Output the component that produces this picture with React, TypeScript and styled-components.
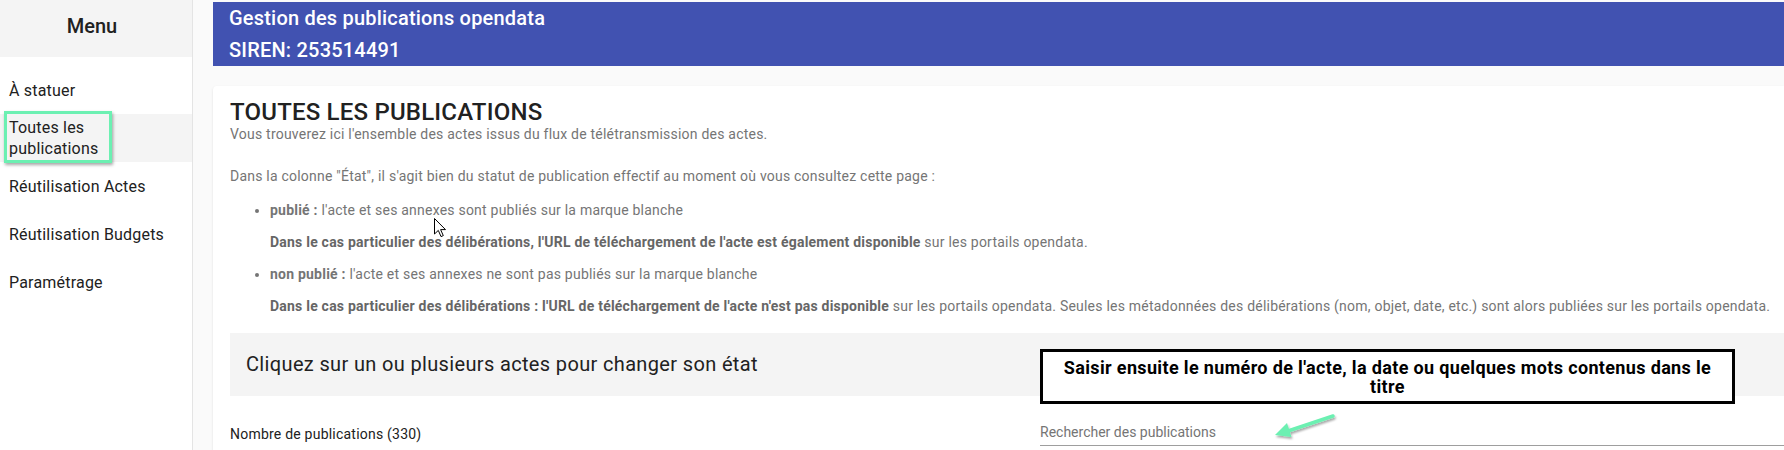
import React from "react";
import styled, { createGlobalStyle } from "styled-components";

const Global = createGlobalStyle`
  html, body { margin: 0; padding: 0; }
  body {
    font-family: Roboto, "Noto Sans", Arial, sans-serif;
    background: #fafafa;
    overflow: hidden;
  }
  * { box-sizing: border-box; }
`;

const Page = styled.div`
  display: flex;
  width: 1784px;
  height: 450px;
  overflow: hidden;
`;

const Sidebar = styled.nav`
  width: 193px;
  flex: 0 0 193px;
  background: #ffffff;
  border-right: 1px solid #e4e4e4;
  position: relative;
`;

const MenuHeader = styled.div`
  height: 57px;
  background: #f4f4f4;
  display: flex;
  align-items: center;
  justify-content: center;
  padding: 0 8px 5px 0;
  font-size: 20px;
  font-weight: 500;
  color: #212121;
`;

const MenuList = styled.ul`
  list-style: none;
  margin: 0;
  padding: 9px 0 0;
`;

const MenuItem = styled.li<{ $active?: boolean }>`
  height: 48px;
  display: flex;
  align-items: center;
  padding: 0 9px;
  font-size: 16px;
  line-height: 21px;
  letter-spacing: 0.2px;
  color: #212121;
  background: ${(p) => (p.$active ? "#f4f4f4" : "transparent")};
`;

const Highlight = styled.div`
  position: absolute;
  left: 4px;
  top: 111px;
  width: 108px;
  height: 52px;
  border: 3px solid #6cf0b2;
  box-shadow: 1px 2px 3px rgba(0, 0, 0, 0.35);
  pointer-events: none;
`;

const Main = styled.main`
  flex: 1;
  min-width: 0;
  padding: 2px 0 0 20px;
  background: #fafafa;
`;

const Header = styled.header`
  background: #4152b1;
  color: #ffffff;
  padding: 0 16px;
  font-size: 20px;
  font-weight: 500;
  line-height: 32px;
  letter-spacing: 0.2px;
`;

const Card = styled.section`
  margin-top: 20px;
  background: #ffffff;
  border-radius: 4px 0 0 4px;
  box-shadow: 0 2px 1px -1px rgba(0, 0, 0, 0.12), 0 1px 1px 0 rgba(0, 0, 0, 0.08),
    0 1px 3px 0 rgba(0, 0, 0, 0.08);
  padding: 15px 0 40px 17px;
  position: relative;
`;

const Title = styled.h1`
  margin: 0;
  font-size: 24px;
  font-weight: 500;
  line-height: 23px;
  letter-spacing: 0.2px;
  color: #212121;
`;

const Text = styled.p<{ $gap?: number }>`
  margin: 0 0 ${(p) => p.$gap ?? 0}px;
  font-size: 14px;
  line-height: 20px;
  letter-spacing: 0.22px;
  color: #757575;
  white-space: nowrap;
`;

const Bullets = styled.ul`
  margin: 14px 0 17px;
  padding-left: 40px;
  color: #757575;
  font-size: 14px;
  line-height: 20px;
  letter-spacing: 0.22px;
`;

const Bullet = styled.li`
  white-space: nowrap;
`;

const Note = styled.p`
  margin: 12px 0;
  white-space: nowrap;
  b { color: #666666; }
`;

const StateBox = styled.div`
  background: #f4f4f4;
  padding: 16px 16px;
  font-size: 20px;
  line-height: 31px;
  letter-spacing: 0.35px;
  color: #212121;
`;

const Row = styled.div`
  display: grid;
  grid-template-columns: 1fr 744px;
  margin-top: 26px;
  align-items: start;
`;

const Count = styled.div`
  font-size: 14px;
  line-height: 20px;
  letter-spacing: 0.22px;
  color: #212121;
  padding-top: 2px;
`;

const SearchField = styled.div`
  position: relative;
  border-bottom: 1px solid #9e9e9e;
  padding-bottom: 3px;
`;

const SearchLabel = styled.div`
  font-size: 14px;
  line-height: 20px;
  color: #757575;
`;

const Annotation = styled.div`
  position: absolute;
  left: 0;
  top: -73px;
  width: 695px;
  height: 55px;
  border: 3px solid #000000;
  background: #ffffff;
  display: flex;
  align-items: center;
  justify-content: center;
  text-align: center;
  font-size: 18px;
  font-weight: 700;
  line-height: 19px;
  letter-spacing: 0.35px;
  color: #000000;
  padding: 0 6px;
`;

const ArrowSvg = styled.svg`
  position: absolute;
  left: 230px;
  top: -12px;
  overflow: visible;
`;

const CursorSvg = styled.svg`
  position: absolute;
  left: 221px;
  top: 132px;
  overflow: visible;
`;

const menu = [
  { label: "À statuer" },
  { label: "Toutes les", label2: "publications", active: true },
  { label: "Réutilisation Actes" },
  { label: "Réutilisation Budgets" },
  { label: "Paramétrage" },
];

export default function App() {
  return (
    <>
      <Global />
      <Page>
        <Sidebar>
          <MenuHeader>Menu</MenuHeader>
          <MenuList>
            {menu.map((m) => (
              <MenuItem key={m.label} $active={m.active}>
                <span>
                  {m.label}
                  {m.label2 && (
                    <>
                      <br />
                      {m.label2}
                    </>
                  )}
                </span>
              </MenuItem>
            ))}
          </MenuList>
          <Highlight />
        </Sidebar>
        <Main>
          <Header>
            <div>Gestion des publications opendata</div>
            <div>SIREN: 253514491</div>
          </Header>
          <Card>
            <Title>TOUTES LES PUBLICATIONS</Title>
            <Text $gap={22}>
              Vous trouverez ici l'ensemble des actes issus du flux de télétransmission des actes.
            </Text>
            <Text>
              Dans la colonne "État", il s'agit bien du statut de publication effectif au moment où
              vous consultez cette page :
            </Text>
            <Bullets>
              <Bullet>
                <b>publié :</b> l'acte et ses annexes sont publiés sur la marque blanche
                <Note>
                  <b>
                    Dans le cas particulier des délibérations, l'URL de téléchargement de l'acte est
                    également disponible
                  </b>{" "}
                  sur les portails opendata.
                </Note>
              </Bullet>
              <Bullet>
                <b>non publié :</b> l'acte et ses annexes ne sont pas publiés sur la marque blanche
                <Note>
                  <b>
                    Dans le cas particulier des délibérations : l'URL de téléchargement de l'acte
                    n'est pas disponible
                  </b>{" "}
                  sur les portails opendata. Seules les métadonnées des délibérations (nom, objet,
                  date, etc.) sont alors publiées sur les portails opendata.
                </Note>
              </Bullet>
            </Bullets>
            <StateBox>Cliquez sur un ou plusieurs actes pour changer son état</StateBox>
            <Row>
              <Count>Nombre de publications (330)</Count>
              <SearchField>
                <SearchLabel>Rechercher des publications</SearchLabel>
                <Annotation>
                  <span>
                    Saisir ensuite le numéro de l'acte, la date ou quelques mots contenus dans le
                    <br />
                    titre
                  </span>
                </Annotation>
                <ArrowSvg width="70" height="32" viewBox="0 0 70 32">
                  <defs>
                    <filter id="ash" x="-20%" y="-40%" width="140%" height="180%">
                      <feDropShadow dx="1" dy="2" stdDeviation="1.2" floodColor="#000" floodOpacity="0.35" />
                    </filter>
                  </defs>
                  <g filter="url(#ash)">
                    <line x1="63" y1="6" x2="18" y2="21" stroke="#6cf0b2" strokeWidth="3.5" strokeLinecap="round" />
                    <polygon points="5,25 21.5,27 17,13" fill="#6cf0b2" />
                  </g>
                </ArrowSvg>
              </SearchField>
            </Row>
            <CursorSvg width="12" height="20" viewBox="0 0 12 20">
              <path
                d="M0.5 0.5 L0.5 16 L4.3 12.4 L7 18.6 L9.3 17.6 L6.6 11.6 L11.5 11.6 Z"
                fill="#ffffff"
                stroke="#000000"
                strokeWidth="1"
                strokeLinejoin="round"
              />
            </CursorSvg>
          </Card>
        </Main>
      </Page>
    </>
  );
}
